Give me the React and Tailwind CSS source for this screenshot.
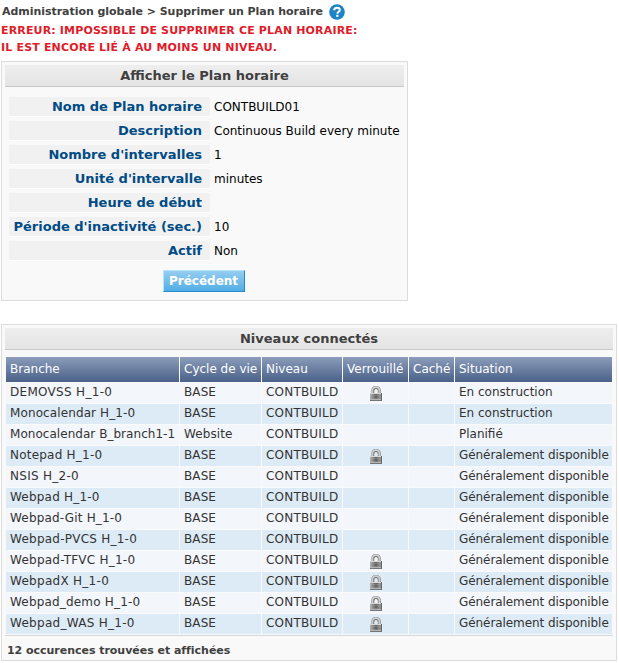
import React from "react";

const details = [
  ["Nom de Plan horaire", "CONTBUILD01"],
  ["Description", "Continuous Build every minute"],
  ["Nombre d'intervalles", "1"],
  ["Unité d'intervalle", "minutes"],
  ["Heure de début", ""],
  ["Période d'inactivité (sec.)", "10"],
  ["Actif", "Non"],
];

const GA = "Généralement disponible";
const levels = [
  ["DEMOVSS H_1-0", "BASE", true, "En construction", "tracking-[0.3px]"],
  ["Monocalendar H_1-0", "BASE", false, "En construction", "tracking-[0.11px]"],
  ["Monocalendar B_branch1-1", "Website", false, "Planifié", "tracking-[0.04px]"],
  ["Notepad H_1-0", "BASE", true, GA, "tracking-[0.22px]"],
  ["NSIS H_2-0", "BASE", false, GA, "tracking-[0.28px]"],
  ["Webpad H_1-0", "BASE", false, GA, "tracking-[0.2px]"],
  ["Webpad-Git H_1-0", "BASE", false, GA, "tracking-[0.18px]"],
  ["Webpad-PVCS H_1-0", "BASE", false, GA, "tracking-[0.24px]"],
  ["Webpad-TFVC H_1-0", "BASE", true, GA, "tracking-[0.24px]"],
  ["WebpadX H_1-0", "BASE", true, GA, "tracking-[0.28px]"],
  ["Webpad_demo H_1-0", "BASE", true, GA, "tracking-[0.18px]"],
  ["Webpad_WAS H_1-0", "BASE", true, GA, "tracking-[0.28px]"],
];

const columns = "grid grid-cols-[173px_81px_80px_65px_45px_157px] gap-x-px";

function HelpIcon() {
  return (
    <svg className="ml-[6px] block shrink-0" width="16" height="16" viewBox="0 0 16 16">
      <circle cx="8" cy="8" r="7.8" fill="#1f84c6" />
      <path d="M5.2 6.3C5.2 4.500 6.300 3.700 8 3.700c1.700 0 2.800.8 2.800 2.200 0 1.900-2.400 1.900-2.400 3.800" fill="none" stroke="#fff" strokeWidth="2" />
      <rect x="7.300" y="10.800" width="2.100" height="2.100" fill="#fff" />
    </svg>
  );
}

function Lock() {
  return (
    <svg className="mt-[3px] ml-px block" width="12" height="15" viewBox="0 0 12 15">
      <defs>
        <linearGradient id="lockBody" x1="0" x2="1" y1="0" y2="0">
          <stop offset="0" stopColor="#b4b4b4" />
          <stop offset="0.5" stopColor="#5e5e5e" />
          <stop offset="0.85" stopColor="#999" />
          <stop offset="1" stopColor="#555" />
        </linearGradient>
      </defs>
      <path d="M2.800 8V4.800Q2.800 1.600 6 1.600T9.300 4.800V8" fill="none" stroke="#777" strokeWidth="3" />
      <path d="M2.400 8V4.500Q2.400 1.200 6 1.200T9.400 4.500V8" fill="none" stroke="#cfcfcf" strokeWidth="1.700" />
      <rect x="0" y="7" width="12" height="8" fill="url(#lockBody)" />
      <path d="M0 7.500H11" stroke="#d8d8d8" />
      <path d="M1 9.500H10M1 12.500H10" stroke="#aaa" strokeOpacity=".35" />
      <path d="M0 13.500H11" stroke="#b4b4b4" />
      <path d="M0 14.500H12" stroke="#747474" />
    </svg>
  );
}

function Heading({ children }) {
  return (
    <h2 className="h-[22px] border-b border-[#c8c8c8] bg-linear-to-b from-[#eeeeee] to-[#e4e4e4] text-center text-[13px] leading-[21px] font-bold text-[#404040]">
      {children}
    </h2>
  );
}

function Cell({ children, className = "" }) {
  return <div className={"overflow-hidden pl-[4px] whitespace-nowrap " + className}>{children}</div>;
}

export default function App() {
  return (
    <main className="h-[663px] w-[619px] overflow-hidden bg-white pl-px font-['Verdana','DejaVu_Sans',sans-serif] text-[12px] text-[#333]">
      <div className="flex h-[24px] items-center pl-px text-[11px] font-bold whitespace-nowrap text-[#404040]">
        <span className="tracking-[-0.04px]">Administration globale &gt; Supprimer un Plan horaire</span>
        <HelpIcon />
      </div>
      <div className="-mt-[3px] mb-[3px] h-[37px] pt-px text-[11px] leading-[17px] font-bold whitespace-nowrap text-[#e01b2a]">
        <p className="tracking-[0.155px]">ERREUR: IMPOSSIBLE DE SUPPRIMER CE PLAN HORAIRE:</p>
        <p className="tracking-[0.175px]">IL EST ENCORE LIÉ À AU MOINS UN NIVEAU.</p>
      </div>

      <section className="h-[240px] w-[407px] border border-[#dcdcdc] bg-[#f9f9f9] p-[3px]">
        <Heading>Afficher le Plan horaire</Heading>
        <dl className="mt-[10px] flex flex-col gap-[4px] pl-[4px]">
          {details.map(([label, value]) => (
            <div key={label} className="flex h-[20px] whitespace-nowrap">
              <dt className="w-[201px] border-b border-white bg-[#f1f1f1] pr-[8px] text-right text-[13px] leading-[19px] font-bold text-[#004b85]">{label}</dt>
              <dd className="pl-[4px] leading-[20px] text-black">{value}</dd>
            </div>
          ))}
        </dl>
        <div className="mt-[9px] flex justify-center pr-[2px]">
          <button className="h-[22px] w-[82px] border border-t-[#b5e5fa] border-r-[#2689ca] border-b-[#2689ca] border-l-[#b5e5fa] bg-linear-to-b from-[#94cdf0] to-[#50aee4] text-[12px] leading-[19px] font-bold whitespace-nowrap text-white">
            Précédent
          </button>
        </div>
      </section>

      <section className="mt-[23px] h-[337px] w-[616px] border border-[#dcdcdc] bg-[#f9f9f9] p-[3px]">
        <Heading>Niveaux connectés</Heading>
        <div className="mt-[7px] ml-px w-[606px]">
          <div className={columns + " h-[25px] leading-[24px] text-white"}>
            {["Branche", "Cycle de vie", "Niveau", "Verrouillé", "Caché", "Situation"].map((h) => (
              <Cell key={h} className="bg-linear-to-b from-[#8b9dba] to-[#4b6188]">{h}</Cell>
            ))}
          </div>
          {levels.map(([branch, cycle, locked, status, tracking], i) => {
            const bg = i % 2 ? "bg-[#ddebf6] h-[20px]" : "bg-[#f3f6fb] h-[20px]";
            return (
              <div key={branch} className={columns + " h-[21px] pt-px leading-[18px]"}>
                <Cell className={bg + " " + tracking}>{branch}</Cell>
                <Cell className={bg + " tracking-[0.1px]"}>{cycle}</Cell>
                <Cell className={bg + " tracking-[0.2px]"}>CONTBUILD</Cell>
                <div className={bg + " flex justify-center"}>{locked && <Lock />}</div>
                <div className={bg} />
                <Cell className={bg + (status === GA ? " tracking-[-0.07px]" : "")}>{status}</Cell>
              </div>
            );
          })}
        </div>
        <p className="mt-px border-t border-[#d8d8d8] pt-[6px] pl-[2px] text-[11px] leading-[18px] font-bold tracking-[-0.03px] text-[#404040]">
          12 occurences trouvées et affichées
        </p>
      </section>
    </main>
  );
}
